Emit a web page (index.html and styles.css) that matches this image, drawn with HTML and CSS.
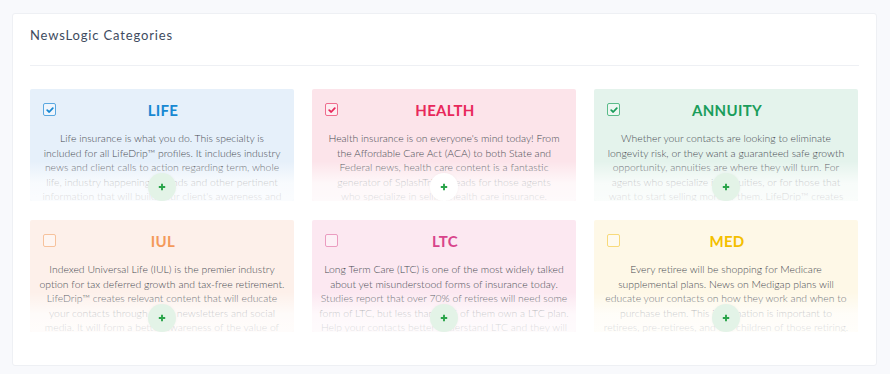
FILE: index.html
```html
<!DOCTYPE html>
<html>
<head>
<meta charset="utf-8">
<link rel="stylesheet" href="styles.css">
</head>
<body>
<div class="panel">
  <h1 class="panel-title">NewsLogic Categories</h1>
  <div class="divider"></div>
  <div class="grid">
    <div class="cat life">
      <div class="head"><span class="box checked"><svg viewBox="0 0 10 10"><path d="M2.2 5.2 L4.2 7 L7.8 3.2"/></svg></span><span class="name">LIFE</span></div>
      <p class="desc">Life insurance is what you do. This specialty is<br>included for all LifeDrip™ profiles. It includes industry<br>news and client calls to action regarding term, whole<br>life, industry happenings, trends and other pertinent<br>information that will build your client's awareness and</p>
      <div class="fade"></div>
      <span class="plus"><svg viewBox="0 0 8 8"><path d="M4 0.8 V7.2 M0.8 4 H7.2"/></svg></span>
    </div>
    <div class="cat health">
      <div class="head"><span class="box checked"><svg viewBox="0 0 10 10"><path d="M2.2 5.2 L4.2 7 L7.8 3.2"/></svg></span><span class="name">HEALTH</span></div>
      <p class="desc">Health insurance is on everyone's mind today! From<br>the Affordable Care Act (ACA) to both State and<br>Federal news, health care content is a fantastic<br>generator of SplashTrics™ leads for those agents<br>who specialize in selling health care insurance.</p>
      <div class="fade"></div>
      <span class="plus white"><svg viewBox="0 0 8 8"><path d="M4 0.8 V7.2 M0.8 4 H7.2"/></svg></span>
    </div>
    <div class="cat annuity">
      <div class="head"><span class="box checked"><svg viewBox="0 0 10 10"><path d="M2.2 5.2 L4.2 7 L7.8 3.2"/></svg></span><span class="name">ANNUITY</span></div>
      <p class="desc">Whether your contacts are looking to eliminate<br>longevity risk, or they want a guaranteed safe growth<br>opportunity, annuities are where they will turn. For<br>agents who specialize in annuities, or for those that<br>want to start selling more of them. LifeDrip™ creates</p>
      <div class="fade"></div>
      <span class="plus"><svg viewBox="0 0 8 8"><path d="M4 0.8 V7.2 M0.8 4 H7.2"/></svg></span>
    </div>
    <div class="cat iul">
      <div class="head"><span class="box"></span><span class="name">IUL</span></div>
      <p class="desc">Indexed Universal Life (IUL) is the premier industry<br>option for tax deferred growth and tax-free retirement.<br>LifeDrip™ creates relevant content that will educate<br>your contacts through email newsletters and social<br>media. It will form a better awareness of the value of</p>
      <div class="fade"></div>
      <span class="plus"><svg viewBox="0 0 8 8"><path d="M4 0.8 V7.2 M0.8 4 H7.2"/></svg></span>
    </div>
    <div class="cat ltc">
      <div class="head"><span class="box"></span><span class="name">LTC</span></div>
      <p class="desc">Long Term Care (LTC) is one of the most widely talked<br>about yet misunderstood forms of insurance today.<br>Studies report that over 70% of retirees will need some<br>form of LTC, but less than 10% of them own a LTC plan.<br>Help your contacts better understand LTC and they will</p>
      <div class="fade"></div>
      <span class="plus"><svg viewBox="0 0 8 8"><path d="M4 0.8 V7.2 M0.8 4 H7.2"/></svg></span>
    </div>
    <div class="cat med">
      <div class="head"><span class="box"></span><span class="name">MED</span></div>
      <p class="desc">Every retiree will be shopping for Medicare<br>supplemental plans. News on Medigap plans will<br>educate your contacts on how they work and when to<br>purchase them. This information is important to<br>retirees, pre-retirees, and the children of those retiring.</p>
      <div class="fade"></div>
      <span class="plus"><svg viewBox="0 0 8 8"><path d="M4 0.8 V7.2 M0.8 4 H7.2"/></svg></span>
    </div>
  </div>
</div>
</body>
</html>
```
FILE: styles.css
```css
* { box-sizing: border-box; }
html, body { margin: 0; padding: 0; }
body {
  background: #f8f9fc;
  font-family: "Lato", "Open Sans", sans-serif;
  padding: 13px 13px 0 12px;
  height: 374px;
}
.panel {
  background: #fff;
  border: 1px solid #eef0f4;
  border-radius: 3px;
  height: 353px;
  padding: 0 17px 0 17px;
}
.panel-title {
  margin: 0;
  padding-top: 13px;
  height: 38px;
  font-size: 13px;
  font-weight: 400;
  color: #3e4b5e;
  letter-spacing: 0.85px;
}
.divider {
  height: 1px;
  background: #eef0f4;
  margin-top: 13px;
}
.grid {
  margin-top: 23px;
  display: grid;
  grid-template-columns: 264px 264px 264px;
  grid-auto-rows: 112px;
  column-gap: 18px;
  row-gap: 19px;
}
.cat {
  position: relative;
  overflow: hidden;
  border-radius: 2px;
  padding: 14px 6px 0 6px;
}
.head {
  display: flex;
  align-items: center;
  height: 13px;
  position: relative;
  padding-left: 7px;
}
.box {
  width: 13px;
  height: 13px;
  border-radius: 2px;
  border: 1.5px solid currentColor;
  display: inline-flex;
  align-items: center;
  justify-content: center;
  flex: none;
  background: rgba(255,255,255,0.35);
}
.box svg { width: 10px; height: 10px; }
.box svg path {
  fill: none;
  stroke-width: 1.8;
  stroke-linecap: round;
  stroke-linejoin: round;
}
.name {
  position: absolute;
  left: 0; right: 0;
  text-align: center;
  font-size: 15px;
  font-weight: 700;
  letter-spacing: 0.3px;
  padding-left: 2px;
}
.desc {
  margin: 15px 0 0 0;
  text-align: center;
  font-size: 10.4px;
  font-weight: 300;
  line-height: 14.5px;
  color: #474b52;
}
.fade {
  position: absolute;
  left: 0; right: 0; bottom: 0;
  height: 40px;
}
.plus {
  position: absolute;
  left: 50%;
  top: 84px;
  width: 28px;
  height: 28px;
  margin-left: -14px;
  border-radius: 50%;
  background: #e3f3e7;
  display: flex;
  align-items: center;
  justify-content: center;
  box-shadow: 0 0 3px rgba(0,0,0,0.04);
}
.plus svg { width: 8px; height: 8px; }
.plus svg path { stroke: #2aa44a; stroke-width: 1.9; fill: none; }
.plus.white { background: #fff; }

.life { background: #e6f0fa; }
.life .name { color: #1788d2; }
.life .box { color: #5aa8e0; }
.life .box svg path { stroke: #1788d2; }
.life .fade { background: linear-gradient(to bottom, rgba(230,240,250,0), rgba(255,255,255,0.72) 55%, rgba(255,255,255,0.82)); }

.health { background: #fce4ea; }
.health .name { color: #e8285b; }
.health .box { color: #ef6d8e; }
.health .box svg path { stroke: #e8285b; }
.health .fade { background: linear-gradient(to bottom, rgba(252,228,234,0), rgba(255,255,255,0.72) 55%, rgba(255,255,255,0.82)); }

.annuity { background: #e4f3ec; }
.annuity .name { color: #1a9d5b; }
.annuity .box { color: #5bbc8a; }
.annuity .box svg path { stroke: #1a9d5b; }
.annuity .fade { background: linear-gradient(to bottom, rgba(228,243,236,0), rgba(255,255,255,0.72) 55%, rgba(255,255,255,0.82)); }

.iul { background: #fdf0ea; }
.iul .name { color: #f49a5b; }
.iul .box { color: #f7c29c; }
.iul .fade { background: linear-gradient(to bottom, rgba(253,240,234,0), rgba(255,255,255,0.72) 55%, rgba(255,255,255,0.82)); }

.ltc { background: #fce8f1; }
.ltc .name { color: #d8448b; }
.ltc .box { color: #eb9cc0; }
.ltc .fade { background: linear-gradient(to bottom, rgba(252,232,241,0), rgba(255,255,255,0.72) 55%, rgba(255,255,255,0.82)); }

.med { background: #fef8e7; }
.med .name { color: #f4bf00; }
.med .box { color: #f8da7a; }
.med .fade { background: linear-gradient(to bottom, rgba(254,248,231,0), rgba(255,255,255,0.72) 55%, rgba(255,255,255,0.82)); }
```
